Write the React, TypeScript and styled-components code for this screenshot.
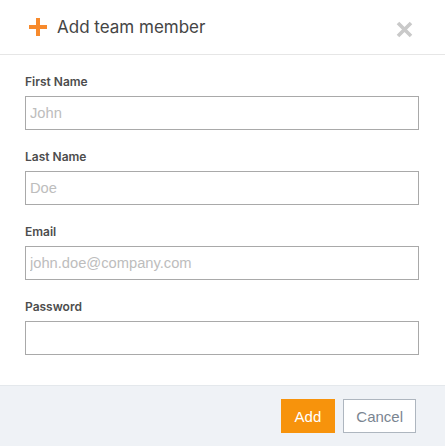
import React from 'react';
import styled, { createGlobalStyle } from 'styled-components';

const GlobalStyle = createGlobalStyle`
	body {
		margin: 0;
		background: #fff;
		font-family: Inter, "Liberation Sans", sans-serif;
	}
`;

const Modal = styled.div`
	width: 445px;
	height: 446px;
	display: flex;
	flex-direction: column;
	background: #fff;
`;

const Header = styled.div`
	height: 54px;
	display: flex;
	align-items: center;
	padding: 0 32px 0 28px;
	border-bottom: 1px solid #e6e6e6;
`;

const Title = styled.h2`
	flex: 1;
	display: flex;
	align-items: center;
	gap: 9px;
	margin: 0;
	font-size: 17px;
	font-weight: 400;
	color: #454545;
`;

const CloseButton = styled.button`
	border: none;
	background: none;
	padding: 0;
	margin-top: 5px;
	display: flex;
	cursor: pointer;
`;

const Form = styled.form`
	flex: 1;
	padding: 19px 26px 0 25px;
`;

const Field = styled.div`
	display: flex;
	flex-direction: column;
	margin-bottom: 19px;
`;

const Label = styled.label`
	font-size: 12px;
	line-height: 16px;
	font-weight: 600;
	color: #4d4d4d;
	margin-bottom: 6px;
`;

const Input = styled.input`
	box-sizing: border-box;
	height: 34px;
	width: 100%;
	border: 1px solid #a9a9a9;
	padding: 0 4px;
	font-family: "Liberation Sans", Arial, sans-serif;
	font-size: 14.7px;
	color: #333;
	outline: none;
	&::placeholder {
		color: #bdbdbd;
	}
`;

const Footer = styled.div`
	height: 61px;
	box-sizing: border-box;
	display: flex;
	justify-content: flex-end;
	align-items: flex-start;
	gap: 8px;
	padding: 13px 29px 0 0;
	background: #eff2f6;
	border-top: 1px solid #e4e8ec;
`;

const Button = styled.button<{ $primary?: boolean }>`
	box-sizing: border-box;
	height: 34px;
	padding: 0 ${p => (p.$primary ? '13px' : '12px')};
	font-family: "Liberation Sans", Arial, sans-serif;
	font-size: 15px;
	cursor: pointer;
	border: 1px solid ${p => (p.$primary ? '#f7930c' : '#aeb6bf')};
	background: ${p => (p.$primary ? '#f7930c' : '#fff')};
	color: ${p => (p.$primary ? '#fff' : '#7a8591')};
`;

const PlusIcon = () => (
	<svg width="20" height="20" viewBox="0 0 20 20">
		<path d="M10 1v18M1 10h18" stroke="#f78a2c" strokeWidth="4" />
	</svg>
);

const CloseIcon = () => (
	<svg width="17" height="17" viewBox="0 0 17 17">
		<path d="M2 2l13 13M15 2L2 15" stroke="#c9c9c9" strokeWidth="3.6" />
	</svg>
);

const fields = [
	{ label: 'First Name', placeholder: 'John', type: 'text' },
	{ label: 'Last Name', placeholder: 'Doe', type: 'text' },
	{ label: 'Email', placeholder: 'john.doe@company.com', type: 'email' },
	{ label: 'Password', placeholder: '', type: 'password' },
];

export default function App() {
	return (<>
		<GlobalStyle />
		<Modal>
			<Header>
				<Title><PlusIcon />Add team member</Title>
				<CloseButton aria-label="Close"><CloseIcon /></CloseButton>
			</Header>
			<Form>
				{fields.map(f => (
					<Field key={f.label}>
						<Label>{f.label}</Label>
						<Input type={f.type} placeholder={f.placeholder} />
					</Field>
				))}
			</Form>
			<Footer>
				<Button $primary>Add</Button>
				<Button>Cancel</Button>
			</Footer>
		</Modal>
	</>);
}
